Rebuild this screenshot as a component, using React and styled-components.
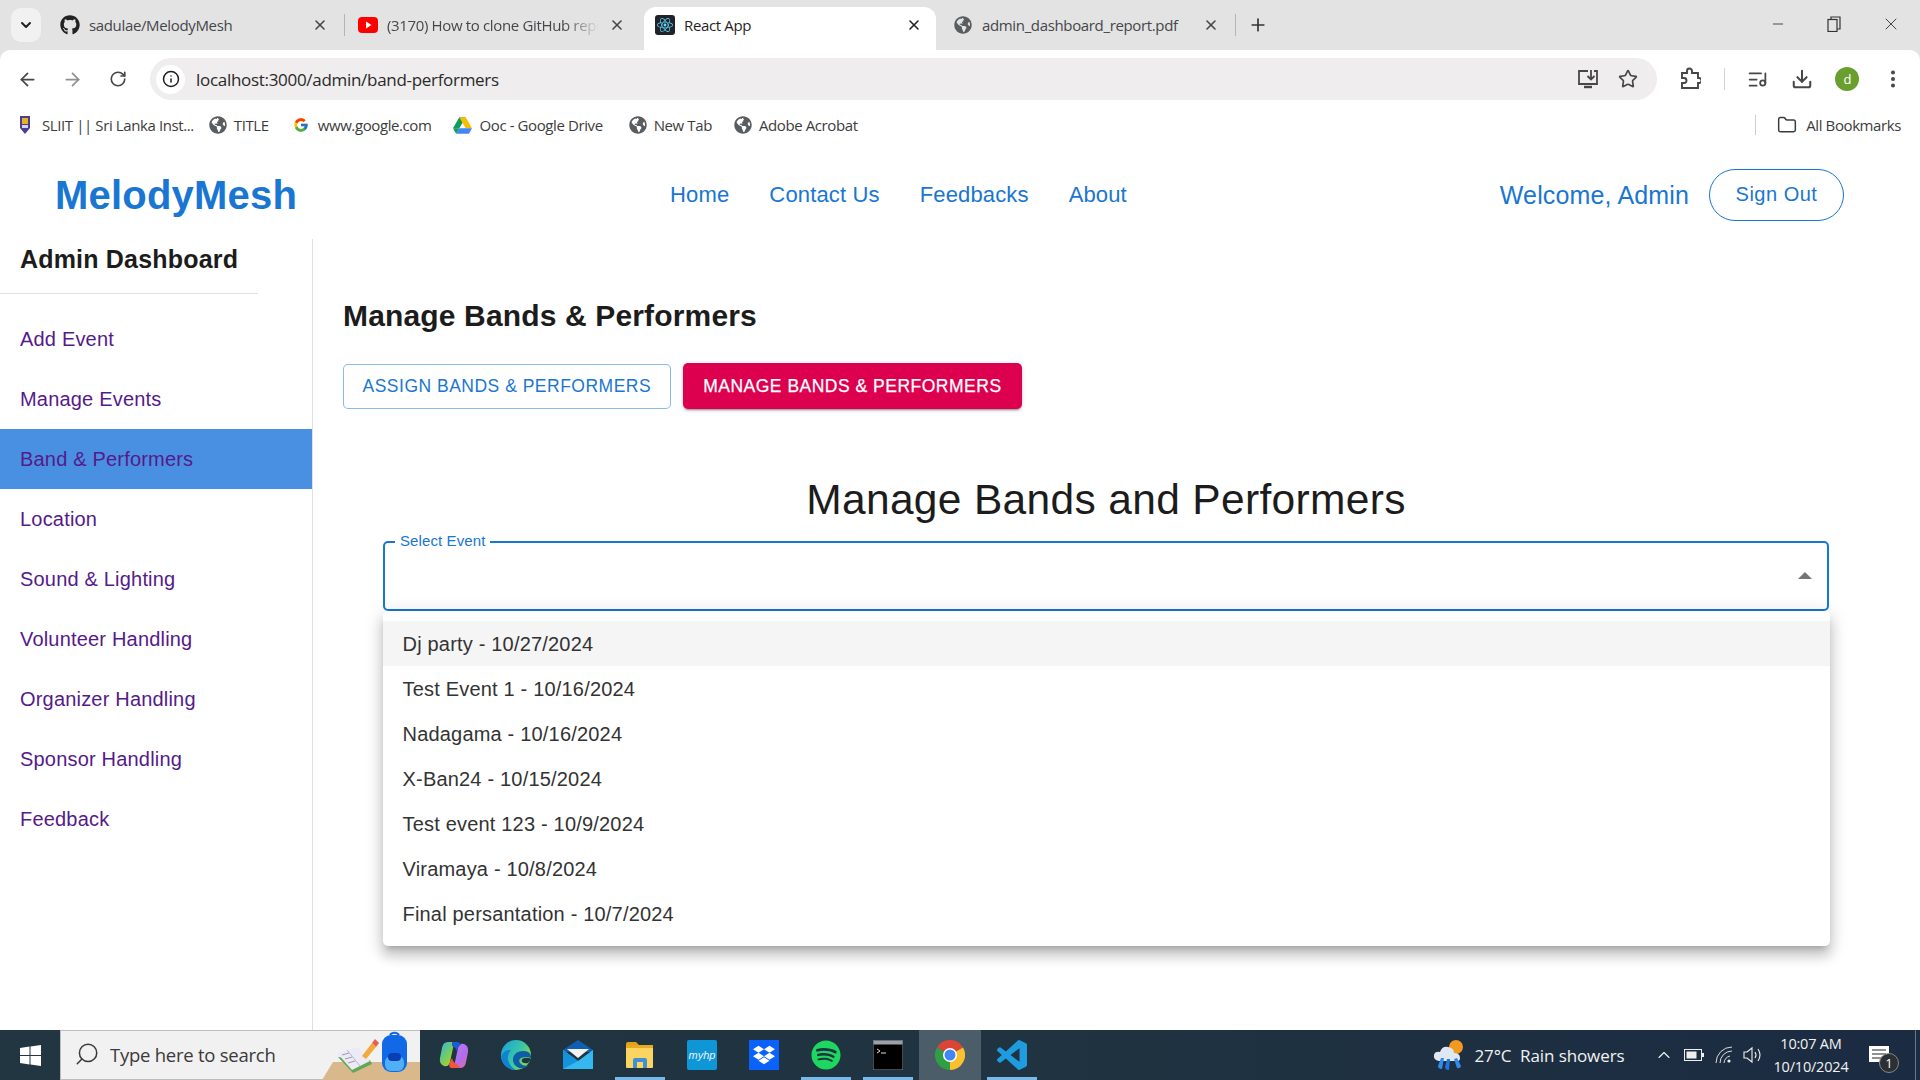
import styled, { createGlobalStyle } from 'styled-components';
import {
  ArrowLeft,
  ArrowRight,
  RotateCw,
  Star,
  Download,
  MoreVertical,
  ListMusic,
  Folder,
  X,
  Plus,
  Minus,
  ChevronDown,
  ChevronUp,
  Search,
  Info,
} from 'lucide-react';
import { FaGithub, FaReact, FaGlobeAmericas, FaDropbox, FaSpotify } from 'react-icons/fa';
import { FcGoogle } from 'react-icons/fc';

const UI_FONT = '"Open Sans", "Noto Sans", sans-serif';
const PAGE_FONT = '"Liberation Sans", Arial, sans-serif';

const GlobalStyle = createGlobalStyle`
  html, body {
    margin: 0;
    padding: 0;
    background: #fff;
    overflow: hidden;
  }
  * {
    box-sizing: border-box;
  }
`;

const Screen = styled.div`
  width: 1920px;
  height: 1080px;
  display: flex;
  flex-direction: column;
  overflow: hidden;
  background: #e3e3e3;
`;

/* browser tabs */
const TabStrip = styled.div`
  height: 50px;
  flex: none;
  display: flex;
  align-items: flex-end;
  padding-left: 11px;
  background: #e3e3e3;
  font: 15px ${UI_FONT};
  letter-spacing: -0.35px;
  color: #45474a;
`;

const TabSearch = styled.div`
  width: 30px;
  height: 34px;
  margin: 0 9px 8px 0;
  border-radius: 10px;
  background: #f1f1f1;
  display: flex;
  align-items: center;
  justify-content: center;
  color: #222;
`;

const Tab = styled.div`
  width: ${(p) => p.$width}px;
  height: 43px;
  display: flex;
  align-items: center;
  padding: 0 ${(p) => p.$right}px 7px ${(p) => p.$left}px;
  border-radius: 12px 12px 0 0;
  background: ${(p) => (p.$active ? '#fff' : 'transparent')};
  color: ${(p) => (p.$active ? '#1f1f1f' : '#45474a')};
`;

const TabIcon = styled.span`
  width: 20px;
  height: 20px;
  margin-right: 9px;
  flex: none;
  display: flex;
  align-items: center;
  justify-content: center;
`;

const TabTitle = styled.span`
  flex: 1;
  min-width: 0;
  overflow: hidden;
  white-space: nowrap;
  mask-image: ${(p) => (p.$fade ? 'linear-gradient(to right, #000 82%, transparent 98%)' : 'none')};
  margin-right: ${(p) => (p.$fade ? '6px' : '0')};
`;

const TabDivider = styled.span`
  width: 1px;
  height: 22px;
  margin-bottom: 14px;
  background: #b5b5b5;
  flex: none;
`;

const NewTab = styled.span`
  margin: 0 0 15px 12px;
  display: flex;
  color: #333;
`;

const WindowControls = styled.div`
  margin-left: auto;
  height: 100%;
  padding: 0 19px 2px 0;
  display: flex;
  align-items: center;
  gap: 40.5px;
  color: #333;
`;

const ReactBadge = styled.span`
  width: 20px;
  height: 20px;
  background: #20232a;
  border-radius: 3px;
  display: flex;
  align-items: center;
  justify-content: center;
  color: #61dafb;
`;

/* address bar */
const Toolbar = styled.div`
  height: 58px;
  flex: none;
  display: flex;
  align-items: center;
  padding: 0 16px 0 15px;
  background: #fff;
  border-radius: 10px 10px 0 0;
  color: #474747;
`;

const NavButton = styled.span`
  width: 24px;
  margin-right: ${(p) => p.$gap ?? 21}px;
  display: flex;
  justify-content: center;
  color: ${(p) => (p.$muted ? '#8f8f8f' : '#474747')};
`;

const AddressBar = styled.div`
  width: 1507px;
  height: 42px;
  margin-left: -1px;
  flex: none;
  display: flex;
  align-items: center;
  border-radius: 21px;
  background: #efeded;
  padding: 0 19px 0 6px;
`;

const InfoButton = styled.span`
  width: 29px;
  height: 29px;
  border-radius: 50%;
  background: #fff;
  display: flex;
  align-items: center;
  justify-content: center;
  color: #1f1f1f;
`;

const Url = styled.span`
  margin-left: 11px;
  flex: 1;
  font: 17px ${UI_FONT};
  letter-spacing: -0.3px;
  color: #2a2a2a;
`;

const BarIcons = styled.span`
  display: flex;
  align-items: center;
  gap: 19px;
`;

const ToolIcons = styled.div`
  display: flex;
  align-items: center;
  margin-left: 22px;
  flex: 1;
  justify-content: space-between;
`;

const ToolDivider = styled.span`
  width: 1px;
  height: 22px;
  background: #d5d5d5;
`;

const Avatar = styled.span`
  width: 24px;
  height: 24px;
  border-radius: 50%;
  background: #6a9f2f;
  color: #fff;
  font: 13px ${UI_FONT};
  display: flex;
  align-items: center;
  justify-content: center;
`;

/* bookmarks */
const BookmarkBar = styled.div`
  height: 35px;
  flex: none;
  display: flex;
  align-items: center;
  padding: 0 19px 1px 19px;
  background: #fff;
  font: 15px ${UI_FONT};
  letter-spacing: -0.4px;
  color: #3c3c3c;
`;

const Bookmark = styled.span`
  display: flex;
  align-items: center;
  gap: ${(p) => p.$iconGap ?? 7}px;
  margin-right: ${(p) => p.$gap ?? 21}px;
  white-space: nowrap;
`;

const BookmarkDivider = styled.span`
  width: 1px;
  height: 20px;
  margin: 0 21px 0 auto;
  background: #cfcfcf;
`;

/* page */
const Page = styled.div`
  flex: 1;
  min-height: 0;
  display: flex;
  flex-direction: column;
  background: #fff;
  font-family: ${PAGE_FONT};
`;

const Header = styled.header`
  height: 96px;
  flex: none;
  display: flex;
  align-items: center;
  padding: 8px 76px 0 55px;
`;

const Logo = styled.div`
  font-size: 40px;
  font-weight: 700;
  color: #1976d2;
  letter-spacing: 0.2px;
`;

const TopNav = styled.nav`
  margin-left: 373px;
  display: flex;
  gap: 40px;
  font-size: 22px;
  letter-spacing: 0.15px;
  color: #1976d2;
`;

const HeaderRight = styled.div`
  margin-left: auto;
  display: flex;
  align-items: center;
  gap: 20px;
`;

const Welcome = styled.span`
  font-size: 25px;
  letter-spacing: 0.15px;
  color: #1976d2;
`;

const SignOut = styled.button`
  width: 135px;
  height: 52px;
  border: 1px solid #1976d2;
  border-radius: 26px;
  background: #fff;
  color: #1976d2;
  font: 20px ${PAGE_FONT};
  letter-spacing: 0.5px;
  padding-bottom: 3px;
`;

const Body = styled.div`
  flex: 1;
  min-height: 0;
  display: flex;
`;

const Sidebar = styled.aside`
  width: 313px;
  flex: none;
  border-right: 1px solid #e0e0e0;
`;

const SidebarTitle = styled.h2`
  width: 258px;
  height: 55px;
  margin: 0 0 15px;
  padding: 3px 0 0 20px;
  font-size: 25px;
  line-height: 35px;
  font-weight: 700;
  letter-spacing: 0.19px;
  color: #1c1c1c;
  border-bottom: 1px solid #dedede;
`;

const SideItem = styled.div`
  height: 60px;
  display: flex;
  align-items: center;
  padding-left: 20px;
  font-size: 20px;
  letter-spacing: 0.19px;
  color: #551a8b;
  background: ${(p) => (p.$active ? '#4a90e2' : 'transparent')};
`;

const Main = styled.main`
  flex: 1;
  min-width: 0;
  padding: 59px 0 0 30px;
`;

const PageTitle = styled.h1`
  margin: 0 0 29px;
  font-size: 30px;
  line-height: 36px;
  font-weight: 700;
  letter-spacing: 0.15px;
  color: #1c1c1c;
`;

const TabButtons = styled.div`
  display: flex;
  align-items: center;
  gap: 12px;
`;

const ModeButton = styled.button`
  height: ${(p) => (p.$active ? 46 : 45)}px;
  padding: 0 ${(p) => (p.$active ? 20.5 : 18.5)}px;
  border-radius: 5px;
  border: ${(p) => (p.$active ? 'none' : '1px solid rgba(25, 118, 210, 0.5)')};
  background: ${(p) => (p.$active ? '#dc004e' : '#fff')};
  color: ${(p) => (p.$active ? '#fff' : '#1976d2')};
  font: 17.5px ${PAGE_FONT};
  letter-spacing: 0.5px;
  -webkit-text-stroke: ${(p) => (p.$active ? '0.25px #fff' : '0')};
  box-shadow: ${(p) =>
    p.$active
      ? '0 3px 1px -2px rgba(0,0,0,.2), 0 2px 2px 0 rgba(0,0,0,.14), 0 1px 5px 0 rgba(0,0,0,.12)'
      : 'none'};
`;

const SelectSection = styled.section`
  width: 1446px;
  margin: 65px 0 0 40px;
`;

const SectionTitle = styled.h2`
  margin: 0 0 15px;
  text-align: center;
  font-size: 42.5px;
  line-height: 52px;
  font-weight: 400;
  letter-spacing: 0.33px;
  color: #1c1c1c;
`;

const SelectField = styled.div`
  position: relative;
  height: 70px;
  border: 2.5px solid #1976d2;
  border-radius: 5px;
  display: flex;
  align-items: center;
  justify-content: flex-end;
  padding: 0 15px 2px 0;
`;

const FieldLabel = styled.label`
  position: absolute;
  top: -11px;
  left: 10px;
  padding: 0 5px;
  background: #fff;
  font-size: 15px;
  line-height: 18px;
  letter-spacing: 0.1px;
  color: #1976d2;
`;

const Caret = styled.span`
  width: 0;
  height: 0;
  border-left: 7px solid transparent;
  border-right: 7px solid transparent;
  border-bottom: 7px solid #757575;
`;

const Menu = styled.ul`
  position: absolute;
  top: 68px;
  left: -2.5px;
  right: -2.5px;
  margin: 0;
  padding: 10px 0;
  list-style: none;
  background: #fff;
  border-radius: 5px;
  box-shadow: 0 6px 6px -4px rgba(0,0,0,.2), 0 10px 12px 1px rgba(0,0,0,.14), 0 4px 18px 3px rgba(0,0,0,.12);
`;

const MenuItem = styled.li`
  height: 45px;
  display: flex;
  align-items: center;
  padding: 1px 0 0 20px;
  font-size: 20px;
  letter-spacing: 0.19px;
  color: #333;
  background: ${(p) => (p.$hover ? '#f5f5f5' : '#fff')};
`;

/* windows taskbar */
const Taskbar = styled.footer`
  height: 50px;
  flex: none;
  display: flex;
  align-items: stretch;
  background: linear-gradient(to right, #213641, #1f3340 55%, #1b2b42);
  color: #fff;
  font-family: ${UI_FONT};
`;

const StartButton = styled.div`
  width: 60px;
  display: flex;
  align-items: center;
  justify-content: center;
`;

const SearchBox = styled.div`
  width: 360px;
  display: flex;
  align-items: center;
  padding: 0 0 2px 13px;
  background: #f1f1f1;
  border-top: 1px solid #bdbdbd;
  border-bottom: 1px solid #bdbdbd;
  border-left: 1px solid #bdbdbd;
  color: #3a3a3a;
  font-size: 18.5px;
  letter-spacing: -0.25px;
`;

const SearchGlyph = styled(Search)`
  transform: scaleX(-1);
  flex: none;
`;

const SearchText = styled.span`
  margin-left: 10px;
  flex: 1;
`;

const ArtWrap = styled.span`
  display: flex;
  margin-bottom: -2px;
`;

const AppList = styled.div`
  margin-left: 3px;
  display: flex;
`;

const AppSlot = styled.div`
  position: relative;
  width: 62px;
  display: flex;
  align-items: center;
  justify-content: center;
  background: ${(p) => (p.$active ? '#4a5d68' : 'transparent')};
  &::after {
    content: '';
    position: absolute;
    left: 6px;
    right: 6px;
    bottom: 0;
    height: 3px;
    background: ${(p) => (p.$open ? '#76b9ed' : 'transparent')};
  }
`;

const Tray = styled.div`
  margin-left: auto;
  display: flex;
  align-items: center;
  padding-right: 4px;
`;

const Weather = styled.div`
  display: flex;
  align-items: center;
  gap: 9px;
  margin-right: 29px;
  font-size: 17px;
  letter-spacing: -0.1px;
  color: #f2f2f2;
`;

const TrayIcons = styled.div`
  display: flex;
  align-items: center;
  gap: 10.5px;
  color: #eee;
`;

const Clock = styled.div`
  width: 90px;
  margin-left: 1px;
  text-align: center;
  font-size: 14.5px;
  line-height: 23px;
  letter-spacing: -0.2px;
  color: #f2f2f2;
`;

const Notify = styled.div`
  position: relative;
  width: 46px;
  margin-right: 13px;
  display: flex;
  justify-content: center;
`;

const NotifyCount = styled.span`
  position: absolute;
  right: 3px;
  bottom: -9px;
  width: 20px;
  height: 20px;
  border-radius: 50%;
  border: 1px solid #888;
  background: #2b3034;
  font-size: 13px;
  line-height: 18px;
  text-align: center;
`;

const TrayEdge = styled.span`
  width: 1px;
  height: 100%;
  background: #6a7784;
`;

const Globe = () => <FaGlobeAmericas size={18} color="#5a5d60" />;

const YoutubeIcon = () => (
  <svg width="20" height="20" viewBox="0 0 20 20">
    <rect x="0" y="2" width="20" height="16" rx="4" fill="#f00" />
    <path d="M8 6.5 L13.5 10 L8 13.5 Z" fill="#fff" />
  </svg>
);

const DriveIcon = () => (
  <svg width="19" height="17" viewBox="0 0 24 21">
    <path d="M8 0 L16 0 L8 14 L0 14 Z" fill="#0f9d58" />
    <path d="M8 0 L16 0 L24 14 L16 14 Z" fill="#fbbc04" />
    <path d="M4 21 L8 14 L24 14 L20 21 Z" fill="#4285f4" />
    <path d="M0 14 L8 14 L4 21 Z" fill="#0f9d58" />
  </svg>
);

const SliitIcon = () => (
  <svg width="12" height="20" viewBox="0 0 12 20">
    <path d="M1 1 H11 V13 L6 19 L1 13 Z" fill="#4c3f91" />
    <rect x="3" y="3" width="6" height="6" fill="#e6b422" />
    <rect x="3" y="10" width="6" height="3" fill="#d9d4ee" />
  </svg>
);

const InstallIcon = () => (
  <svg width="22" height="20" viewBox="0 0 22 20" fill="none" stroke="#474747" strokeWidth="1.8">
    <path d="M11 2 H2 V15 H20 V2 H17" />
    <path d="M14 1 V10 M10.5 7 L14 10.5 L17.5 7" />
    <path d="M7 18 H15" strokeWidth="2.4" />
  </svg>
);

const ExtensionIcon = () => (
  <svg width="22" height="24" viewBox="0 0 22 24" fill="none" stroke="#474747" strokeWidth="1.9">
    <path d="M3 6 H8 V4 a2.5 2.5 0 0 1 5 0 V6 H19 V11 H20 a2 2 0 0 1 0 5 H19 V21 H3 V16 H5 a2.5 2.5 0 0 0 0 -5 H3 Z" />
  </svg>
);

const RestoreIcon = () => (
  <svg width="14" height="16" viewBox="0 0 14 16" fill="none" stroke="#333" strokeWidth="1.2">
    <rect x="1" y="3.5" width="9" height="12" />
    <path d="M4 3.5 V1 H13 V13 H10" />
  </svg>
);

const WindowsLogo = () => (
  <svg width="21" height="21" viewBox="0 0 21 21" fill="#fff">
    <path d="M0 3 L9.5 1.6 V10 H0 Z" />
    <path d="M10.5 1.4 L21 0 V10 H10.5 Z" />
    <path d="M0 11 H9.5 V19.4 L0 18 Z" />
    <path d="M10.5 11 H21 V21 L10.5 19.6 Z" />
  </svg>
);

const SearchArt = () => (
  <svg width="98" height="49" viewBox="0 0 98 49">
    <path d="M11 31 H98 V49 H0 Z" fill="#d9b98c" />
    <path d="M16 26 L31 42 L50 33 L48 29 Z" fill="#5fa85a" />
    <path d="M15 22 L36 16 L48 30 L30 39 Z" fill="#ecebf5" />
    <path d="M25 19 L38 35" stroke="#b9b6cf" strokeWidth="1" />
    <path d="M20 24 L27 22 M23 28 L30 26 M26 32 L33 30" stroke="#9a97b5" strokeWidth="1" />
    <path d="M40 25 L50 12 L54 16 L44 28 Z" fill="#f3a93c" />
    <path d="M50 12 L53 8 L57 12 L54 16 Z" fill="#e8604c" />
    <path d="M68 4 a5 4 0 0 1 9 0" fill="none" stroke="#1169e8" strokeWidth="2" />
    <rect x="60" y="4" width="25" height="37" rx="9" fill="#1169e8" />
    <rect x="63" y="25" width="19" height="15" rx="6" fill="#4fb0f5" />
    <rect x="66" y="22" width="13" height="8" rx="4" fill="#0a3fb4" />
  </svg>
);

const CopilotIcon = () => (
  <svg width="30" height="30" viewBox="0 0 30 30">
    <defs>
      <linearGradient id="copA" x1="0" y1="0" x2="1" y2="1">
        <stop offset="0" stopColor="#2fb5e8" />
        <stop offset="0.55" stopColor="#7fd04e" />
        <stop offset="1" stopColor="#f5c132" />
      </linearGradient>
      <linearGradient id="copB" x1="0" y1="0" x2="1" y2="1">
        <stop offset="0" stopColor="#c67bf0" />
        <stop offset="0.6" stopColor="#b06cf0" />
        <stop offset="1" stopColor="#f06a8a" />
      </linearGradient>
    </defs>
    <path d="M9 2 H18 Q15 3 14 8 L11 22 Q10 27 5 26 Q0 24 1 18 L3 8 Q4 2 9 2 Z" fill="url(#copA)" />
    <path d="M21 28 H12 Q15 27 16 22 L19 8 Q20 3 25 4 Q30 6 29 12 L27 22 Q26 28 21 28 Z" fill="url(#copB)" />
    <path d="M13 2 H18 Q21 2 22 5 Q20 5 19 8 L18 12 Q17 7 13 6 Z" fill="#1b5bd8" />
    <path d="M11 22 L13 18 Q14 23 18 24 L21 28 H12 Q9 27 11 22 Z" fill="#f0573a" />
  </svg>
);

const EdgeIcon = () => (
  <svg width="30" height="30" viewBox="0 0 30 30">
    <defs>
      <linearGradient id="edgeA" x1="0" y1="0" x2="1" y2="0.6">
        <stop offset="0" stopColor="#1aa0dc" />
        <stop offset="0.6" stopColor="#38c6a8" />
        <stop offset="1" stopColor="#8ad84a" />
      </linearGradient>
    </defs>
    <circle cx="15" cy="15" r="15" fill="url(#edgeA)" />
    <path d="M30 16 Q29 11 22 11 Q14 11 12 18 Q11 25 18 28 Q24 29 28 25 Q22 27 19 23 Q17 20 20 18 Q25 16 30 18 Z" fill="#0d5ea8" />
    <path d="M15 30 Q3 30 0 18 Q2 9 10 10 Q6 14 7 20 Q9 27 15 30 Z" fill="#1083d0" />
    <path d="M30 19 Q28 17 23 18 Q20 19 21 22 Q24 24 27 23 Q29 21 30 19 Z" fill="#213641" />
  </svg>
);

const MailIcon = () => (
  <svg width="30" height="30" viewBox="0 0 30 30">
    <path d="M0 10 L15 0 L30 10 V12 H0 Z" fill="#0f5fb0" />
    <path d="M4 9 H26 L15 18 Z" fill="#f2f2f2" />
    <path d="M0 10 L15 21 L30 10 V29 H0 Z" fill="#35b8f0" />
    <path d="M0 10 L15 21 L0 29 Z" fill="#1493dc" />
  </svg>
);

const ExplorerIcon = () => (
  <svg width="28" height="26" viewBox="0 0 28 26">
    <path d="M0 2 Q0 0 2 0 H10 L13 3 H0 Z" fill="#e0a11b" />
    <rect x="0" y="3" width="27" height="5" fill="#eaa91f" />
    <rect x="0" y="6" width="27" height="20" rx="1" fill="#fcd462" />
    <path d="M7 26 V18 Q7 16 9 16 H19 Q21 16 21 18 V26 H17 V20 H11 V26 Z" fill="#3f91d4" />
  </svg>
);

const HpTile = styled.span`
  width: 30px;
  height: 30px;
  border-radius: 2px;
  background: #0f96d6;
  color: #e6f5fd;
  display: flex;
  align-items: center;
  justify-content: center;
  font: italic 11px ${PAGE_FONT};
`;

const DropboxTile = styled.span`
  width: 30px;
  height: 30px;
  background: #0a62fb;
  display: flex;
  align-items: center;
  justify-content: center;
  color: #fff;
`;

const TerminalIcon = () => (
  <svg width="30" height="30" viewBox="0 0 30 30">
    <rect x="0" y="0" width="30" height="30" fill="#000" stroke="#8a9298" />
    <rect x="0.5" y="0.5" width="29" height="4" fill="#9aa2a8" />
    <path d="M4 9 L7 11 L4 13 M8 13 H13" stroke="#ddd" strokeWidth="1" fill="none" />
  </svg>
);

const ChromeIcon = () => (
  <svg width="30" height="30" viewBox="0 0 24 24">
    <path d="M12 12 L1.6 6 A12 12 0 0 1 22.4 6 Z" fill="#db4437" />
    <path d="M12 12 L22.4 6 A12 12 0 0 1 12 24 Z" fill="#fbc02d" />
    <path d="M12 12 L12 24 A12 12 0 0 1 1.6 6 Z" fill="#2f9e44" />
    <circle cx="12" cy="12" r="5.6" fill="#fff" />
    <circle cx="12" cy="12" r="4.4" fill="#4285f4" />
  </svg>
);

const VscodeIcon = () => (
  <svg width="30" height="30" viewBox="0 0 24 24" fill="#1f9be0">
    <path d="M23.15 2.587L18.21.21a1.494 1.494 0 0 0-1.705.29l-9.46 8.63-4.12-3.128a.999.999 0 0 0-1.276.057L.327 7.261A1 1 0 0 0 .326 8.74L3.899 12 .326 15.26a1 1 0 0 0 .001 1.479L1.65 17.94a.999.999 0 0 0 1.276.057l4.12-3.128 9.46 8.63a1.492 1.492 0 0 0 1.704.29l4.942-2.377A1.5 1.5 0 0 0 24 20.06V3.939a1.5 1.5 0 0 0-.85-1.352zm-5.146 14.861L10.826 12l7.178-5.448v10.896z" />
  </svg>
);

const WeatherIcon = () => (
  <svg width="32" height="32" viewBox="0 0 32 32">
    <circle cx="23" cy="8" r="7" fill="#f39a1e" />
    <path d="M6 22 Q0 21 1 16 Q2 12 7 13 Q9 7 15 8 Q21 9 21 14 Q27 14 27 19 Q27 23 22 22 Z" fill="#dfe8f2" />
    <path d="M8 19 L11 19 L9 30 Q5 30 5 27 Z" fill="#2f8df0" />
    <path d="M14 20 L17 20 L16 31 Q12 31 12 28 Z" fill="#1f75e0" />
    <path d="M21 20 L24 19 L28 27 Q27 30 24 29 Z" fill="#2f8df0" />
  </svg>
);

const BatteryIcon = () => (
  <svg width="20" height="12" viewBox="0 0 20 12">
    <rect x="0.5" y="0.5" width="17" height="11" fill="none" stroke="#eee" />
    <rect x="2.5" y="2.5" width="10" height="7" fill="#eee" />
    <rect x="18" y="4" width="2" height="4" fill="#eee" />
  </svg>
);

const WifiIcon = () => (
  <svg width="18" height="18" viewBox="0 0 18 18" fill="none" stroke="#ddd" strokeWidth="1">
    <path d="M1 17 A16 16 0 0 1 17 1" />
    <path d="M5 17 A12 12 0 0 1 17 5" />
    <path d="M9 17 A8 8 0 0 1 15 10" />
    <circle cx="14" cy="15" r="1.6" fill="#eee" stroke="none" />
  </svg>
);

const SpeakerIcon = () => (
  <svg width="22" height="18" viewBox="0 0 22 18" fill="none" stroke="#eee" strokeWidth="1.1">
    <path d="M1 6 H4 L9 2 V16 L4 12 H1 Z" />
    <path d="M12 6 Q14 9 12 12" />
    <path d="M15 3 Q19 9 15 15" />
  </svg>
);

const NotifyIcon = () => (
  <svg width="20" height="18" viewBox="0 0 20 18">
    <path d="M0 0 H20 V16 H0 Z" fill="#fff" />
    <path d="M3 4 H17 M3 8 H17 M3 12 H12" stroke="#222" strokeWidth="1" />
  </svg>
);

const SIDE_ITEMS = [
  'Add Event',
  'Manage Events',
  'Band & Performers',
  'Location',
  'Sound & Lighting',
  'Volunteer Handling',
  'Organizer Handling',
  'Sponsor Handling',
  'Feedback',
];

const EVENTS = [
  'Dj party - 10/27/2024',
  'Test Event 1 - 10/16/2024',
  'Nadagama - 10/16/2024',
  'X-Ban24 - 10/15/2024',
  'Test event 123 - 10/9/2024',
  'Viramaya - 10/8/2024',
  'Final persantation - 10/7/2024',
];

export default function App() {
  return (
    <Screen>
      <GlobalStyle />
      <TabStrip>
        <TabSearch>
          <ChevronDown size={16} strokeWidth={3} />
        </TabSearch>
        <Tab $width={294} $left={10} $right={16}>
          <TabIcon>
            <FaGithub size={20} color="#222" />
          </TabIcon>
          <TabTitle>sadulae/MelodyMesh</TabTitle>
          <X size={16} strokeWidth={2.4} />
        </Tab>
        <TabDivider />
        <Tab $width={299} $left={13} $right={19}>
          <TabIcon>
            <YoutubeIcon />
          </TabIcon>
          <TabTitle $fade>(3170) How to clone GitHub repo</TabTitle>
          <X size={16} strokeWidth={2.4} />
        </Tab>
        <Tab $width={292} $left={11} $right={14} $active>
          <TabIcon>
            <ReactBadge>
              <FaReact size={16} />
            </ReactBadge>
          </TabIcon>
          <TabTitle>React App</TabTitle>
          <X size={16} strokeWidth={2.4} color="#222" />
        </Tab>
        <Tab $width={299} $left={17} $right={16}>
          <TabIcon>
            <Globe />
          </TabIcon>
          <TabTitle>admin_dashboard_report.pdf</TabTitle>
          <X size={16} strokeWidth={2.4} />
        </Tab>
        <TabDivider />
        <NewTab>
          <Plus size={20} strokeWidth={2} />
        </NewTab>
        <WindowControls>
          <Minus size={16} strokeWidth={1.3} />
          <RestoreIcon />
          <X size={20} strokeWidth={1.1} />
        </WindowControls>
      </TabStrip>

      <Toolbar>
        <NavButton $gap={21}>
          <ArrowLeft size={21} strokeWidth={2} />
        </NavButton>
        <NavButton $gap={22} $muted>
          <ArrowRight size={21} strokeWidth={2} />
        </NavButton>
        <NavButton $gap={21}>
          <RotateCw size={18} strokeWidth={2.2} />
        </NavButton>
        <AddressBar>
          <InfoButton>
            <Info size={18} strokeWidth={2} />
          </InfoButton>
          <Url>localhost:3000/admin/band-performers</Url>
          <BarIcons>
            <InstallIcon />
            <Star size={20} strokeWidth={2} />
          </BarIcons>
        </AddressBar>
        <ToolIcons>
          <ExtensionIcon />
          <ToolDivider />
          <ListMusic size={21} strokeWidth={2} />
          <Download size={22} strokeWidth={2.2} />
          <Avatar>d</Avatar>
          <MoreVertical size={22} strokeWidth={2.4} />
        </ToolIcons>
      </Toolbar>

      <BookmarkBar>
        <Bookmark $gap={15} $iconGap={11}>
          <SliitIcon />
          SLIIT || Sri Lanka Inst...
        </Bookmark>
        <Bookmark $gap={24}>
          <Globe />
          TITLE
        </Bookmark>
        <Bookmark $gap={22} $iconGap={9}>
          <FcGoogle size={16} />
          www.google.com
        </Bookmark>
        <Bookmark $gap={26}>
          <DriveIcon />
          Ooc - Google Drive
        </Bookmark>
        <Bookmark $gap={22}>
          <Globe />
          New Tab
        </Bookmark>
        <Bookmark $gap={0}>
          <Globe />
          Adobe Acrobat
        </Bookmark>
        <BookmarkDivider />
        <Bookmark $gap={0} $iconGap={9}>
          <Folder size={20} strokeWidth={1.8} />
          All Bookmarks
        </Bookmark>
      </BookmarkBar>

      <Page>
        <Header>
          <Logo>MelodyMesh</Logo>
          <TopNav>
            <span>Home</span>
            <span>Contact Us</span>
            <span>Feedbacks</span>
            <span>About</span>
          </TopNav>
          <HeaderRight>
            <Welcome>Welcome, Admin</Welcome>
            <SignOut>Sign Out</SignOut>
          </HeaderRight>
        </Header>
        <Body>
          <Sidebar>
            <SidebarTitle>Admin Dashboard</SidebarTitle>
            {SIDE_ITEMS.map((item) => (
              <SideItem key={item} $active={item === 'Band & Performers'}>
                {item}
              </SideItem>
            ))}
          </Sidebar>
          <Main>
            <PageTitle>Manage Bands &amp; Performers</PageTitle>
            <TabButtons>
              <ModeButton>ASSIGN BANDS &amp; PERFORMERS</ModeButton>
              <ModeButton $active>MANAGE BANDS &amp; PERFORMERS</ModeButton>
            </TabButtons>
            <SelectSection>
              <SectionTitle>Manage Bands and Performers</SectionTitle>
              <SelectField>
                <FieldLabel>Select Event</FieldLabel>
                <Caret />
                <Menu>
                  {EVENTS.map((event, i) => (
                    <MenuItem key={event} $hover={i === 0}>
                      {event}
                    </MenuItem>
                  ))}
                </Menu>
              </SelectField>
            </SelectSection>
          </Main>
        </Body>
      </Page>

      <Taskbar>
        <StartButton>
          <WindowsLogo />
        </StartButton>
        <SearchBox>
          <SearchGlyph size={26} strokeWidth={1.4} />
          <SearchText>Type here to search</SearchText>
          <ArtWrap>
            <SearchArt />
          </ArtWrap>
        </SearchBox>
        <AppList>
          <AppSlot>
            <CopilotIcon />
          </AppSlot>
          <AppSlot>
            <EdgeIcon />
          </AppSlot>
          <AppSlot>
            <MailIcon />
          </AppSlot>
          <AppSlot $open>
            <ExplorerIcon />
          </AppSlot>
          <AppSlot>
            <HpTile>myhp</HpTile>
          </AppSlot>
          <AppSlot>
            <DropboxTile>
              <FaDropbox size={22} />
            </DropboxTile>
          </AppSlot>
          <AppSlot $open>
            <FaSpotify size={30} color="#1ed760" />
          </AppSlot>
          <AppSlot $open>
            <TerminalIcon />
          </AppSlot>
          <AppSlot $active>
            <ChromeIcon />
          </AppSlot>
          <AppSlot $open>
            <VscodeIcon />
          </AppSlot>
        </AppList>
        <Tray>
          <Weather>
            <WeatherIcon />
            <span>27°C&nbsp;&nbsp;Rain showers</span>
          </Weather>
          <TrayIcons>
            <ChevronUp size={20} strokeWidth={1.4} />
            <BatteryIcon />
            <WifiIcon />
            <SpeakerIcon />
          </TrayIcons>
          <Clock>
            10:07 AM
            <br />
            10/10/2024
          </Clock>
          <Notify>
            <NotifyIcon />
            <NotifyCount>1</NotifyCount>
          </Notify>
          <TrayEdge />
        </Tray>
      </Taskbar>
    </Screen>
  );
}
